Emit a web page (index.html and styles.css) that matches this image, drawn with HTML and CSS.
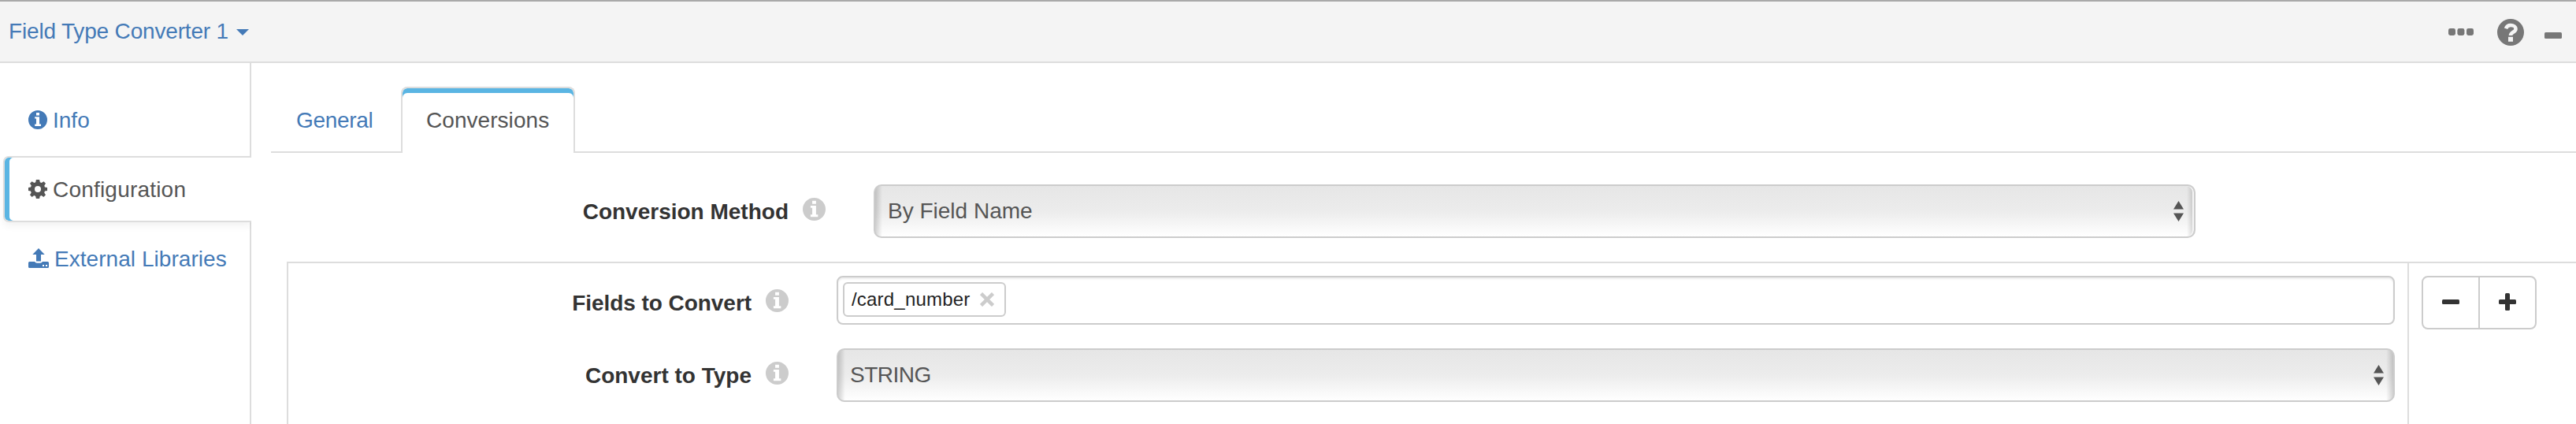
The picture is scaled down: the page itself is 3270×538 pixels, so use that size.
FILE: index.html
```html
<!DOCTYPE html>
<html lang="en">
<head>
<meta charset="utf-8">
<title>Field Type Converter 1</title>
<link rel="stylesheet" href="styles.css">
</head>
<body>
<svg width="0" height="0" class="defs">
  <symbol id="info" viewBox="0 0 24 24"><path fill-rule="evenodd" d="M12 0a12 12 0 1 0 0 24a12 12 0 1 0 0-24zM10 3h4v3.400h-4zM8.200 8.200H14V17.600h2V20H8.200v-2.400H10v-7H8.200z"/></symbol>
</svg>
<header class="header">
  <a class="title"><span class="t">Field Type Converter 1</span><i class="caret"></i></a>
  <div class="tools">
    <svg class="dots" viewBox="0 0 32 9"><rect width="9" height="9" rx="2.4"/><rect x="11.4" width="9" height="9" rx="2.4"/><rect x="23" width="9" height="9" rx="2.4"/></svg>
    <svg class="help" viewBox="0 0 34 34"><circle cx="17" cy="17" r="17"/><path d="M11 12.3C12 9.3 14.2 8 17 8c3.700 0 6.500 2 6.500 4.700c0 4.200-6.500 4-6.500 8.300" fill="none" stroke="#f4f4f4" stroke-width="4.600"/><rect x="14" y="22.800" width="6" height="6" fill="#f4f4f4"/></svg>
    <svg class="minimize" viewBox="0 0 22 8"><rect width="22" height="8" rx="1.500"/></svg>
  </div>
</header>
<main class="body">
  <nav class="side">
    <a class="item info"><svg class="ic"><use href="#info"/></svg><span class="t">Info</span></a>
    <a class="item active"><svg class="ic" viewBox="0 0 24 24"><path fill-rule="evenodd" d="M9.900 0h4.200l.7 3.300 1.900.8L19.500 2.200l2.500 2.600-1.700 2.800.6 1.900 3.100.6v3.800l-3.100.7-.7 1.900 1.800 2.700-2.600 2.700-2.800-1.800-1.900.8-.6 3.100H9.900l-.7-3.100-1.900-.8-2.800 1.800L2 19.200l1.700-2.700-.7-1.900L0 13.900v-3.800l3-.6.8-1.900L2 4.800l2.500-2.600 2.900 1.900 1.800-.8zM12 8a4 4 0 1 0 0 8a4 4 0 1 0 0-8z"/></svg><span class="t">Configuration</span></a>
    <a class="item ext"><svg class="ic up" viewBox="0 0 26 26"><path fill-rule="evenodd" d="M13 0l7.700 8h-4.700v8.500h-6V8H5.300zM1.500 17H8c1 1.300 2 1.800 5 1.800s4-.5 5-1.800h6.500a1.500 1.500 0 0 1 1.500 1.500v5a1.500 1.500 0 0 1-1.500 1.500h-23A1.500 1.500 0 0 1 0 23.500v-5A1.500 1.500 0 0 1 1.500 17zM18 21v2h2v-2zM22 21v2h2v-2z"/></svg><span class="t">External Libraries</span></a>
  </nav>
  <section class="content">
    <div class="tabs">
      <a class="tab"><span class="t">General</span></a>
      <a class="tab on"><span class="t">Conversions</span></a>
    </div>
    <div class="row method">
      <label class="label"><span class="t">Conversion Method</span></label><svg class="hint"><use href="#info"/></svg>
      <div class="select"><span class="t">By Field Name</span><svg class="arrows" viewBox="0 0 13 26"><path d="M6.500 0L13 10.500H0zM6.500 26L13 15.500H0z"/></svg></div>
    </div>
    <div class="table">
      <div class="cell">
        <div class="row fields">
          <label class="label"><span class="t">Fields to Convert</span></label><svg class="hint"><use href="#info"/></svg>
          <div class="input"><div class="tag"><span class="t">/card_number</span><svg class="x" viewBox="0 0 18 18"><path d="M1.500 1.500l15 15M16.500 1.500l-15 15"/></svg></div></div>
        </div>
        <div class="row type">
          <label class="label"><span class="t">Convert to Type</span></label><svg class="hint"><use href="#info"/></svg>
          <div class="select"><span class="t">STRING</span><svg class="arrows" viewBox="0 0 13 26"><path d="M6.500 0L13 10.500H0zM6.500 26L13 15.500H0z"/></svg></div>
        </div>
      </div>
      <div class="actions">
        <div class="group">
          <button class="btn"><svg width="22" height="22"><rect y="8" width="22" height="6" rx="1.500"/></svg></button>
          <button class="btn"><svg width="22" height="22"><rect y="8" width="22" height="6" rx="1.500"/><rect x="8" width="6" height="22" rx="1.500"/></svg></button>
        </div>
      </div>
    </div>
  </section>
</main>
</body>
</html>
```
FILE: styles.css
```css
* { box-sizing: border-box; }
body { margin: 0; height: 538px; overflow: hidden; background: #fff; color: #333; font: 28px/40px "Liberation Sans", Arial, sans-serif; display: flex; flex-direction: column; }
.defs { position: absolute; }
svg { display: block; flex: none; fill: currentColor; }
.t { white-space: nowrap; }
.header { height: 80px; flex: none; background: #f4f4f4; border-top: 2px solid #a9a9a9; border-bottom: 2px solid #ddd; display: flex; justify-content: space-between; padding: 17px 18px 0 11px; }
.title { color: #447ab7; display: flex; padding-top: 1px; }
.title .t { width: 279px; letter-spacing: -.17px; }
.caret { margin: 17px 0 0 10px; width: 0; height: 0; border: 8px solid transparent; border-top-color: currentColor; border-bottom: 0; }
.tools { display: flex; color: #777; }
.dots { width: 32px; height: 9px; margin: 17px 30px 0 0; }
.help { width: 34px; height: 34px; margin: 5px 26px 0 0; }
.minimize { width: 22px; height: 8px; margin-top: 22px; }
.body { flex: 1; min-height: 0; display: flex; }
.side { width: 319px; padding-left: 4px; display: flex; flex-direction: column; }
.item { display: flex; color: #447ab7; padding-left: 32px; border-right: 2px solid #ddd; gap: 7px; }
.item .ic { width: 24px; height: 24px; }
.info { height: 118px; padding-top: 53px; }
.info .ic { margin-top: 7px; }
.active { height: 84px; color: #555; border: 2px solid #ddd; border-right: 0; border-radius: 7px 0 0 7px; padding: 21px 0 0 30px; box-shadow: inset 6px 0 #5ab5e3, 0 5px 10px rgba(0,0,0,.05); clip-path: inset(0 0 -20px -10px); }
.active .t { letter-spacing: .2px; }
.active .ic { margin-top: 7px; }
.ext { flex: 1; padding-top: 27px; }
.ext .t { letter-spacing: .05px; }
.item .up { width: 26px; height: 26px; margin-top: 6px; }
.content { flex: 1; padding: 30px 0 0 25px; display: flex; flex-direction: column; }
.tabs { height: 84px; flex: none; display: flex; box-shadow: inset 0 -2px #ddd; }
.tab { width: 165px; padding: 23px 0 0 32px; color: #447ab7; letter-spacing: -.3px; }
.tab.on { width: 221px; color: #555; letter-spacing: .05px; border: 2px solid #ddd; border-bottom: 0; border-radius: 8px 8px 0 0; background: #fff; box-shadow: inset 0 6px #5ab5e3; padding: 21px 0 0 30px; }
.row { display: flex; }
.label { font-weight: bold; text-align: right; }
.hint { width: 29px; height: 29px; color: #ccc; margin-left: 18px; }
.method { margin-top: 40px; }
.method .label { width: 657px; padding-top: 15px; }
.method .hint { margin-top: 17px; }
.method .select { margin-left: 61px; width: 1678px; box-shadow: inset -2px 0 #f4f4f4; }
.select { height: 68px; border: 2px solid #ccc; border-radius: 10px; background: linear-gradient(90deg, rgba(0,0,0,.17), transparent 9px, transparent calc(100% - 9px), rgba(0,0,0,.17)), linear-gradient(#e6e6e6, #ececec 50%, #fff); color: #555; display: flex; justify-content: space-between; padding: 12px 13px 0 16px; }
.arrows { width: 13px; height: 26px; margin-top: 7px; }
.table { margin: 30px 0 0 20px; flex: 1; border-top: 2px solid #ddd; border-left: 2px solid #ddd; display: flex; }
.cell { width: 2692px; border-right: 2px solid #ddd; padding-top: 16px; }
.cell .label { width: 588px; }
.cell .row > :last-child { width: 1978px; margin-left: 61px; }
.fields .label { padding-top: 15px; letter-spacing: -.05px; }
.fields .hint { margin-top: 17px; }
.input { height: 62px; border: 2px solid #ccc; border-radius: 8px; padding: 6px; box-shadow: inset 0 2px 2px rgba(0,0,0,.075); }
.tag { width: 207px; height: 44px; border: 2px solid #ccc; border-radius: 6px; padding: 0 13px 0 9px; display: flex; justify-content: space-between; font-size: 24px; letter-spacing: .2px; color: #222; }
.x { width: 18px; height: 18px; margin-top: 11px; fill: none; stroke: #ccc; stroke-width: 4.500; }
.type { margin-top: 30px; }
.type .label { padding-top: 15px; }
.type .hint { margin-top: 17px; }
.type .select { padding: 12px 12px 0 15px; }
.type .select .t { letter-spacing: -.5px; }
.actions { padding: 16px 0 0 16px; }
.group { display: flex; width: 146px; height: 68px; border: 2px solid #ccc; border-radius: 8px; }
.btn { width: 70px; padding: 0 0 2px; border: 0; background: none; color: #333; display: flex; align-items: center; justify-content: center; }
.btn + .btn { width: 72px; border-left: 2px solid #ccc; }
```
